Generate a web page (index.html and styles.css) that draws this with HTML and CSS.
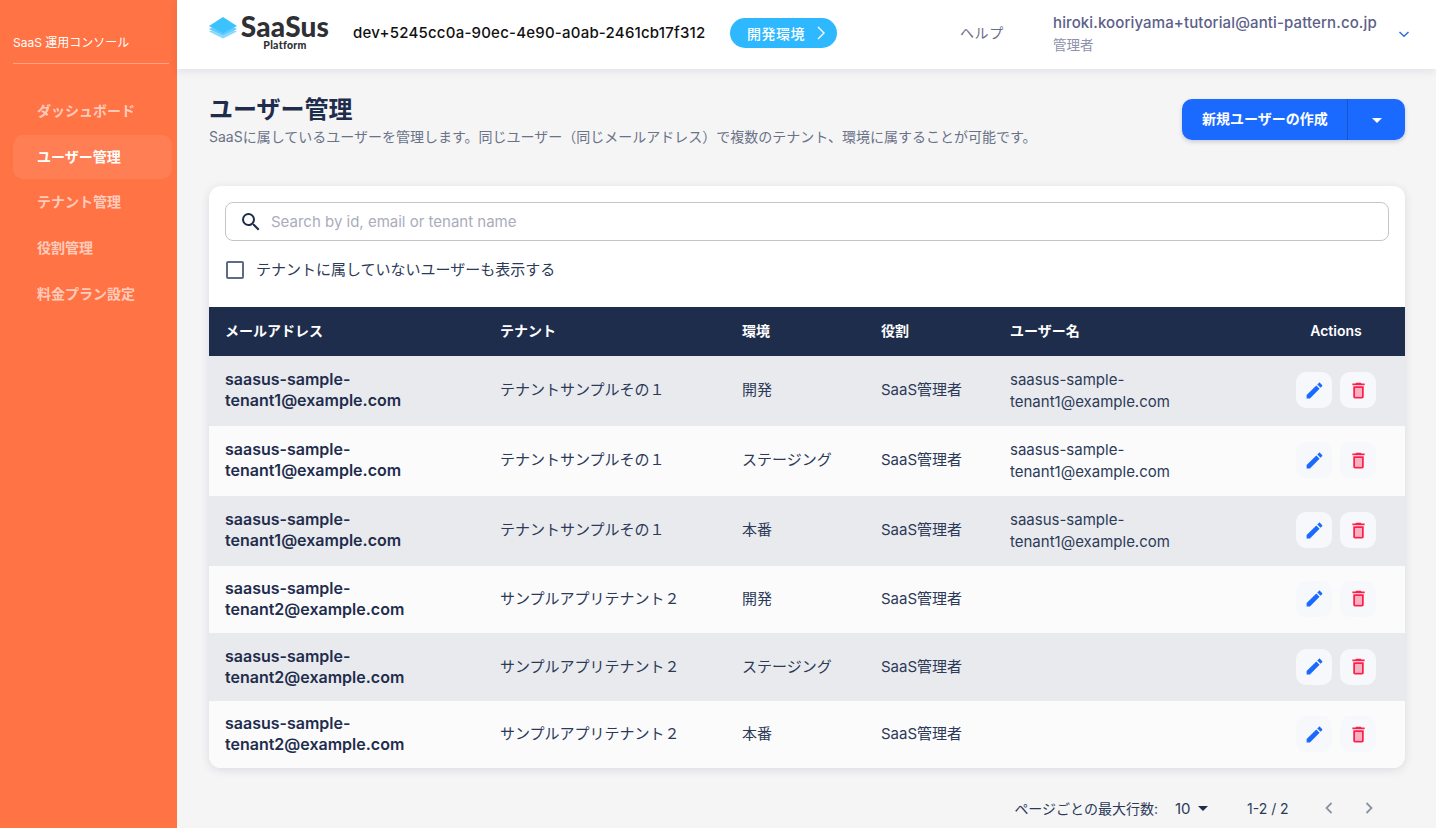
FILE: index.html
```html
<!DOCTYPE html>
<html lang="ja">
<head>
<meta charset="utf-8">
<title>ユーザー管理</title>
<link rel="stylesheet" href="styles.css">
</head>
<body>
<svg class="sprites" width="0" height="0" aria-hidden="true">
  <symbol id="i-edit" viewBox="0 0 24 24"><path fill="#1a6aff" d="M3 17.250V21h3.750L17.810 9.940l-3.750-3.750L3 17.250zM20.710 7.040c.39-.39.39-1.020 0-1.410l-2.340-2.340c-.39-.39-1.020-.39-1.410 0l-1.830 1.830 3.750 3.750 1.830-1.830z"/></symbol>
  <symbol id="i-del" viewBox="0 0 24 24"><path fill="#ff2d55" opacity=".35" d="M8 9h8v10H8z"/><path fill="#ff1f4b" d="M15.500 4l-1-1h-5l-1 1H5v2h14V4zM6 19c0 1.100.9 2 2 2h8c1.100 0 2-.9 2-2V7H6v12zM8 9h8v10H8V9z"/></symbol>
</svg>
<div class="app">
  <aside class="sidebar">
    <div class="side-title">SaaS 運用コンソール</div>
    <nav class="side-nav">
      <a class="nav-item">ダッシュボード</a>
      <a class="nav-item active">ユーザー管理</a>
      <a class="nav-item">テナント管理</a>
      <a class="nav-item">役割管理</a>
      <a class="nav-item">料金プラン設定</a>
    </nav>
  </aside>
  <div class="content">
    <header class="topbar">
      <div class="logo">
        <svg class="logo-mark" width="28" height="22" viewBox="0 0 28 22">
          <path d="M0 14.500l14 7 14-7-3-1-11 5.500-11-5.500z" fill="#86d9ff"/>
          <path d="M0 12l14 7 14-7-3-1.500-11 5.500-11-5.500z" fill="#62ccff"/>
          <path d="M14 0l14 9-14 7.500-14-7.500z" fill="#3cc3ff"/>
        </svg>
        <div class="logo-text">
          <span class="logo-name">SaaSus</span>
          <span class="logo-sub">Platform</span>
        </div>
      </div>
      <div class="env-id">dev+5245cc0a-90ec-4e90-a0ab-2461cb17f312</div>
      <div class="env-badge">開発環境
        <svg width="10" height="16" viewBox="0 0 10 16"><path d="M2 2l6 6-6 6" fill="none" stroke="#fff" stroke-width="1.400"/></svg>
      </div>
      <div class="help">ヘルプ</div>
      <div class="account">
        <div class="account-mail">hiroki.kooriyama+tutorial@anti-pattern.co.jp</div>
        <div class="account-role">管理者</div>
      </div>
      <svg class="account-caret" width="12" height="8" viewBox="0 0 12 8"><path d="M1.500 2l4.500 4.200L10.500 2" fill="none" stroke="#2b6fe8" stroke-width="1.500"/></svg>
    </header>
    <main class="main">
      <div class="page-head">
        <div>
          <h1 class="page-title">ユーザー管理</h1>
          <p class="page-desc">SaaSに属しているユーザーを管理します。同じユーザー（同じメールアドレス）で複数のテナント、環境に属することが可能です。</p>
        </div>
        <div class="split-btn">
          <span class="split-main">新規ユーザーの作成</span>
          <span class="split-arrow"><i class="caret caret-white"></i></span>
        </div>
      </div>
      <section class="card">
        <div class="filters">
          <div class="search">
            <svg width="24" height="24" viewBox="0 0 24 24"><path fill="#1f2d4d" d="M15.500 14h-.79l-.28-.27A6.470 6.470 0 0 0 16 9.500 6.500 6.500 0 1 0 9.500 16c1.610 0 3.090-.59 4.230-1.570l.27.28v.79l5 4.990L20.490 19l-4.990-5zm-6 0C7.010 14 5 11.990 5 9.500S7.010 5 9.500 5 14 7.010 14 9.500 11.990 14 9.500 14z"/></svg>
            <span class="placeholder">Search by id, email or tenant name</span>
          </div>
          <label class="check"><span class="check-box"></span>テナントに属していないユーザーも表示する</label>
        </div>
        <table class="users">
          <colgroup>
            <col class="c1"><col class="c2"><col class="c3"><col class="c4"><col class="c5"><col class="c6">
          </colgroup>
          <thead>
            <tr><th>メールアドレス</th><th>テナント</th><th>環境</th><th>役割</th><th>ユーザー名</th><th class="th-actions">Actions</th></tr>
          </thead>
          <tbody>
            <tr class="tall">
              <td class="mail">saasus-sample-<br>tenant1@example.com</td><td>テナントサンプルその１</td><td>開発</td><td>SaaS管理者</td><td class="name">saasus-sample-<br>tenant1@example.com</td>
              <td class="actions"><span class="icon-btn"><svg><use href="#i-edit"/></svg></span><span class="icon-btn"><svg><use href="#i-del"/></svg></span></td>
            </tr>
            <tr class="tall">
              <td class="mail">saasus-sample-<br>tenant1@example.com</td><td>テナントサンプルその１</td><td>ステージング</td><td>SaaS管理者</td><td class="name">saasus-sample-<br>tenant1@example.com</td>
              <td class="actions"><span class="icon-btn"><svg><use href="#i-edit"/></svg></span><span class="icon-btn"><svg><use href="#i-del"/></svg></span></td>
            </tr>
            <tr class="tall">
              <td class="mail">saasus-sample-<br>tenant1@example.com</td><td>テナントサンプルその１</td><td>本番</td><td>SaaS管理者</td><td class="name">saasus-sample-<br>tenant1@example.com</td>
              <td class="actions"><span class="icon-btn"><svg><use href="#i-edit"/></svg></span><span class="icon-btn"><svg><use href="#i-del"/></svg></span></td>
            </tr>
            <tr class="short">
              <td class="mail">saasus-sample-<br>tenant2@example.com</td><td>サンプルアプリテナント２</td><td>開発</td><td>SaaS管理者</td><td class="name"></td>
              <td class="actions"><span class="icon-btn"><svg><use href="#i-edit"/></svg></span><span class="icon-btn"><svg><use href="#i-del"/></svg></span></td>
            </tr>
            <tr class="short">
              <td class="mail">saasus-sample-<br>tenant2@example.com</td><td>サンプルアプリテナント２</td><td>ステージング</td><td>SaaS管理者</td><td class="name"></td>
              <td class="actions"><span class="icon-btn"><svg><use href="#i-edit"/></svg></span><span class="icon-btn"><svg><use href="#i-del"/></svg></span></td>
            </tr>
            <tr class="short">
              <td class="mail">saasus-sample-<br>tenant2@example.com</td><td>サンプルアプリテナント２</td><td>本番</td><td>SaaS管理者</td><td class="name"></td>
              <td class="actions"><span class="icon-btn"><svg><use href="#i-edit"/></svg></span><span class="icon-btn"><svg><use href="#i-del"/></svg></span></td>
            </tr>
          </tbody>
        </table>
      </section>
      <div class="pager">
        <span class="pager-label">ページごとの最大行数:</span>
        <span class="pager-size">10<i class="caret caret-dark"></i></span>
        <span class="pager-range">1-2 / 2</span>
        <svg class="pager-arrow" width="10" height="14" viewBox="0 0 10 14"><path d="M7.500 2l-5 5 5 5" fill="none" stroke="#8d92a5" stroke-width="1.800"/></svg>
        <svg class="pager-arrow" width="10" height="14" viewBox="0 0 10 14"><path d="M2.500 2l5 5-5 5" fill="none" stroke="#8d92a5" stroke-width="1.800"/></svg>
      </div>
    </main>
  </div>
</div>
</body>
</html>
```
FILE: styles.css
```css
* { box-sizing: border-box; }
html, body { margin: 0; height: 100%; overflow: hidden; }
body {
  font-family: Inter, "Noto Sans CJK JP", sans-serif;
  font-size: 15px;
  line-height: 21px;
  color: #1f2d4d;
  background: #f5f5f6;
}
.sprites { display: block; height: 0; }
.app { display: flex; height: 828px; }

.sidebar {
  width: 177px;
  flex: none;
  background: #ff7345;
  padding: 0 5px 0 13px;
  color: #fff;
}
.side-title {
  height: 64px;
  padding-top: 34px;
  font-size: 12px;
  line-height: 18px;
  border-bottom: 1px solid rgba(255,255,255,.35);
  margin-right: 3px;
}
.side-nav { display: flex; flex-direction: column; padding-top: 25px; gap: 1.700px; }
.nav-item {
  display: block;
  height: 44px;
  padding-left: 24px;
  font-size: 14px;
  line-height: 43px;
  font-weight: 600;
  color: rgba(255,255,255,.65);
  border-radius: 10px;
}
.nav-item.active { color: #fff; font-weight: 700; background: rgba(255,255,255,.08); }

.content { flex: 1; min-width: 0; display: flex; flex-direction: column; }
.topbar {
  height: 69px;
  flex: none;
  background: #fff;
  display: flex;
  align-items: center;
  padding: 0 0 5px 32px;
  box-shadow: 0 2px 8px rgba(31,45,77,.1);
  position: relative;
  z-index: 1;
}
.logo { display: flex; align-items: flex-start; width: 144px; height: 40px; margin-top: 1px; }
.logo-mark { margin-top: 4px; margin-right: 4px; flex: none; }
.logo-text { display: flex; flex-direction: column; align-items: center; width: 88px; }
.logo-name { font-family: Lato, sans-serif; font-weight: 900; font-size: 28px; line-height: 27px; color: #2f3033; letter-spacing: .2px; }
.logo-sub { font-family: Lato, sans-serif; font-weight: 900; font-size: 10.500px; line-height: 11px; color: #2f3033; letter-spacing: .3px; }
.env-id { font-weight: 500; color: #111; width: 377px; letter-spacing: .22px; }
.env-badge {
  width: 107px;
  height: 30px;
  margin-top: 2px;
  border-radius: 15px;
  background: #2eb8ff;
  color: #fff;
  font-size: 14px;
  font-weight: 500;
  display: flex;
  align-items: center;
  gap: 11px;
  padding-left: 17px;
  letter-spacing: .5px;
}
.help { margin-left: 123px; width: 93px; font-size: 14px; color: #6a6d87; letter-spacing: .6px; }
.account { width: 345px; margin-top: 5px; }
.account-mail { font-weight: 500; color: #5c6088; line-height: 21px; letter-spacing: .12px; }
.account-role { color: #8e91ab; line-height: 24px; font-size: 13.500px; }
.account-caret { flex: none; margin-top: 4px; }

.main { flex: 1; min-height: 0; padding: 0 31px 0 32px; }
.page-head { display: flex; justify-content: space-between; padding-top: 26px; height: 117px; }
.page-title { margin: 0; font-size: 24px; line-height: 29px; font-weight: 700; color: #1f2d4d; }
.page-desc { margin: 3px 0 0; font-size: 14px; line-height: 20px; color: #6b7288; }
.split-btn {
  display: flex;
  width: 223px;
  height: 41px;
  margin-top: 4px;
  background: #1a6aff;
  border-radius: 10px;
  color: #fff;
  font-weight: 700;
  font-size: 14px;
  box-shadow: 0 2px 4px rgba(31,45,77,.2);
}
.split-main { width: 166px; padding-left: 20px; line-height: 39px; border-right: 1px solid rgba(31,45,77,.35); }
.split-arrow { flex: 1; display: flex; align-items: center; justify-content: center; }
.caret { display: inline-block; width: 0; height: 0; border-left: 5px solid transparent; border-right: 5px solid transparent; border-top: 5px solid #fff; }
.caret-white { margin-top: 2px; }
.caret-dark { border-top-color: #1f2d4d; margin-left: 7px; vertical-align: 3px; }

.card {
  background: #fff;
  border-radius: 12px;
  overflow: hidden;
  box-shadow: 0 2px 10px rgba(31,45,77,.12);
}
.filters { padding: 16px 16px 0; height: 121px; }
.search {
  height: 39px;
  border: 1px solid #c4c5c9;
  border-radius: 8px;
  display: flex;
  align-items: center;
  gap: 8px;
  padding-left: 13px;
}
.placeholder { color: #a9adbb; }
.check { display: flex; align-items: center; margin-top: 18px; gap: 12px; color: #2c3a58; }
.check-box { width: 18px; height: 18px; border: 2px solid #5f6a85; border-radius: 2px; margin-left: 1px; }

.users { width: 100%; border-collapse: collapse; table-layout: fixed; }
.c1 { width: 275px; }
.c2 { width: 242px; }
.c3 { width: 139px; }
.c4 { width: 129px; }
.c5 { width: 273px; }
.c6 { width: 138px; }
.users th {
  height: 49px;
  background: #1f2d4d;
  color: #fff;
  text-align: left;
  font-size: 14px;
  font-weight: 600;
  padding: 0 16px 2px;
}
.users th.th-actions { text-align: center; }
.users td { padding: 0 16px; color: #2c3a58; }
.users tbody tr:nth-child(odd) { background: #e9eaee; }
.users tbody tr:nth-child(even) { background: #fbfbfc; }
.tall td { height: 70px; padding-bottom: 4px; }
.short td { height: 67.330px; padding-bottom: 2px; }
.users td.mail { font-weight: 600; font-size: 16px; color: #1f2d4d; padding-bottom: 2px; }
.users td.name { line-height: 22px; padding-bottom: 0; }
.users td.actions { padding: 0 0 2px; }
.users tr:nth-child(n+5) td.mail, .users tr:nth-child(n+5) td.actions { padding-bottom: 0; }
.users tr:nth-child(5) td { padding-bottom: 0; }
.actions { white-space: nowrap; text-align: center; font-size: 0; }
.icon-btn {
  display: inline-flex;
  align-items: center;
  justify-content: center;
  width: 36px;
  height: 36px;
  border-radius: 10px;
  background: #f6f8fb;
  vertical-align: middle;
}
.icon-btn + .icon-btn { margin-left: 8px; }
.icon-btn svg { width: 21px; height: 21px; }

.pager {
  display: flex;
  align-items: center;
  justify-content: flex-end;
  margin-top: 30px;
  padding-right: 31px;
  color: #2c3a58;
}
.pager-label { font-size: 14px; }
.pager-size { margin-left: 17px; width: 72px; }
.pager-range { width: 77px; font-size: 14px; }
.pager-arrow { margin-right: 30px; }
.pager-arrow:last-child { margin-right: 0; }
```
